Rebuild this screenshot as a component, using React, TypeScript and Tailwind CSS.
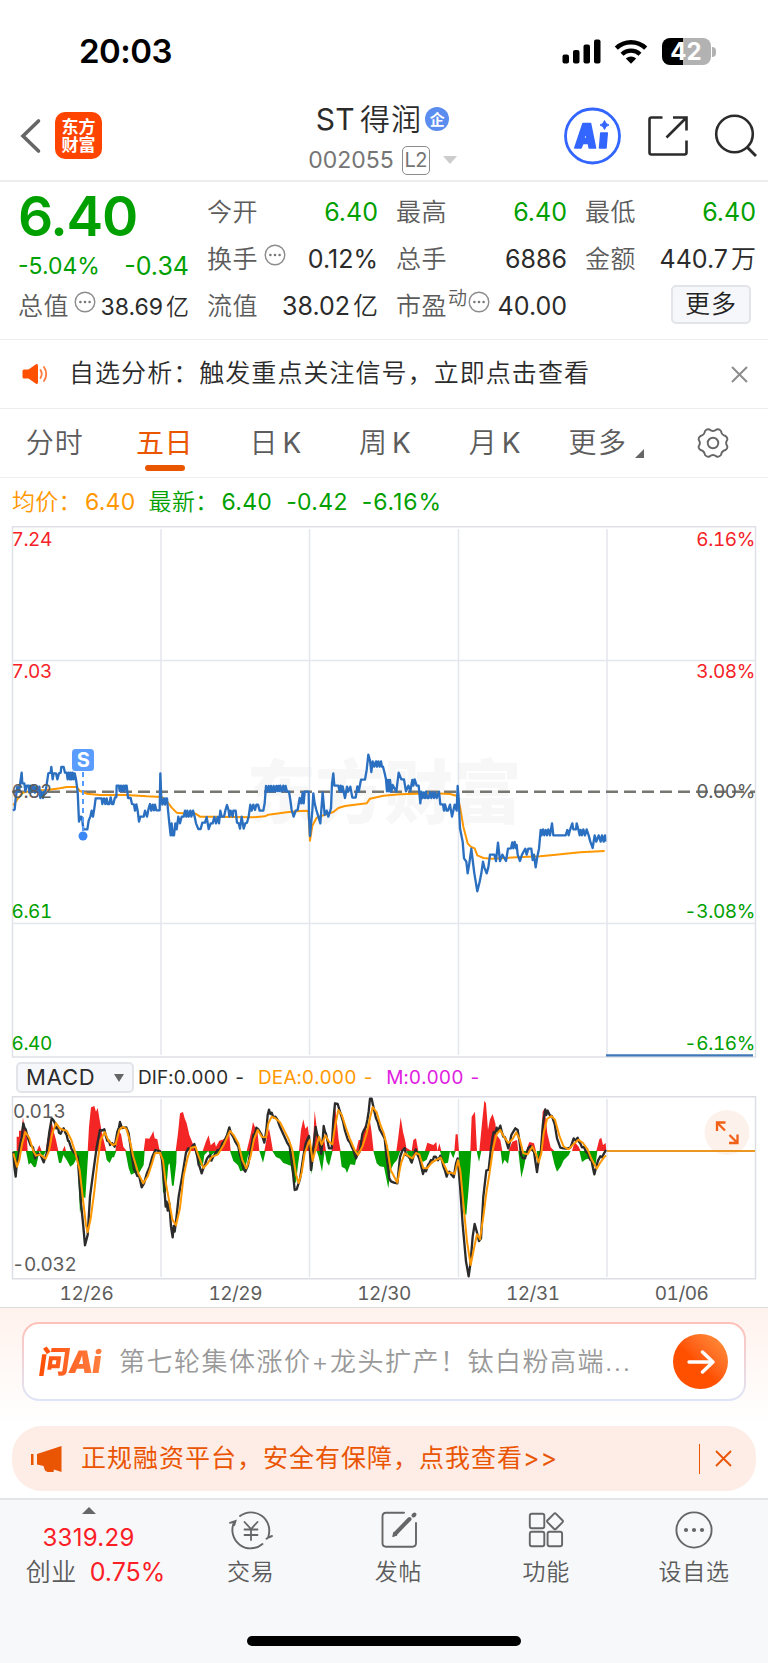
import React from "react";

const tabs = [
    { label: "分时" },
    { label: "五日" },
    { label: "日", unit: "K" },
    { label: "周", unit: "K" },
    { label: "月", unit: "K" },
];
const dates = ["12/26", "12/29", "12/30", "12/31", "01/06"];

// Intraday series, drawn at three units per pixel
const pricePoints =
    "39,272 44,268 47,236 52,200 57,215 62,180 65,158 67,190 73,190 76,215 80,197 86,197 88,218 91,197 93,215 97,197 99,215 101,197 105,218 109,200 113,215 118,200 121,234 124,215 129,234 132,215 136,215 139,200 145,160 152,158 154,141 158,178 161,160 168,160 172,178 177,160 182,158 184,141 191,141 195,158 200,158 203,178 206,158 210,178 212,158 215,178 218,158 221,178 224,160 228,178 233,215 237,305 242,290 246,292 250,328 262,328 266,302 271,290 275,272 279,290 283,265 287,235 305,235 307,252 312,235 316,252 320,235 323,252 328,252 332,232 336,252 340,252 345,232 349,232 350,197 357,197 359,213 363,197 366,213 370,197 373,213 376,197 380,197 384,234 392,234 396,252 402,254 405,272 409,253 413,272 417,305 421,290 431,290 435,272 441,290 446,265 450,252 454,272 458,254 462,271 465,254 469,271 479,271 481,160 484,235 487,254 492,235 495,254 498,235 501,235 504,270 508,310 512,346 515,310 518,346 522,346 526,310 530,328 535,290 540,310 545,290 551,290 555,272 559,290 562,272 566,290 571,272 574,290 579,272 584,290 588,310 595,327 602,327 607,308 615,308 620,291 626,327 632,310 638,310 643,291 648,310 653,291 657,310 661,272 665,290 672,290 676,272 681,255 686,272 688,290 692,272 698,290 700,272 707,272 711,308 716,310 720,326 725,290 731,326 736,310 741,308 746,290 751,254 755,272 760,254 765,270 769,254 774,254 779,272 790,272 794,250 798,198 802,215 806,198 810,215 813,198 817,215 821,198 825,215 829,198 832,213 835,198 838,213 841,197 845,215 850,197 854,213 857,198 861,215 867,215 871,240 875,270 881,290 887,272 893,270 899,234 904,250 908,217 911,250 914,215 922,215 926,215 927,290 930,348 937,272 940,220 944,250 949,270 955,290 961,310 968,217 974,285 980,272 985,290 993,265 996,190 1000,160 1003,197 1015,197 1019,215 1022,197 1025,215 1028,199 1031,215 1035,234 1041,200 1045,215 1051,200 1057,233 1067,233 1072,199 1076,215 1083,179 1095,179 1100,150 1105,104 1110,122 1114,156 1118,124 1123,140 1128,124 1131,140 1135,124 1139,140 1143,124 1146,140 1149,140 1154,160 1158,178 1161,214 1164,180 1167,214 1170,180 1174,215 1178,195 1189,215 1196,158 1204,178 1212,178 1218,214 1225,197 1231,213 1237,180 1240,197 1244,178 1250,197 1256,197 1261,250 1264,215 1268,234 1271,217 1275,234 1278,215 1282,234 1286,234 1290,217 1294,234 1298,217 1302,234 1306,217 1310,234 1317,215 1321,253 1329,253 1332,272 1335,253 1340,272 1344,272 1350,254 1356,290 1364,254 1370,272 1373,198 1376,235 1380,325 1388,365 1392,415 1399,425 1403,460 1408,430 1414,386 1418,420 1423,460 1432,514 1439,485 1444,460 1449,425 1453,442 1460,460 1465,442 1470,404 1483,404 1488,423 1494,368 1500,423 1507,404 1518,423 1524,386 1533,385 1537,367 1540,385 1544,366 1548,385 1550,375 1553,404 1560,423 1566,404 1576,386 1580,404 1585,386 1594,386 1598,420 1602,404 1607,442 1612,410 1617,386 1622,330 1625,346 1629,328 1633,346 1637,330 1641,346 1645,328 1650,346 1656,310 1660,346 1697,346 1702,330 1706,346 1710,330 1717,310 1720,328 1728,328 1730,310 1735,328 1739,346 1742,330 1746,346 1750,328 1755,346 1760,328 1766,346 1771,365 1778,384 1784,346 1789,365 1796,346 1802,365 1806,346 1811,365 1815,346 1816,365";

const averagePoints =
    "40,256 52,238 68,218 90,213 140,210 180,205 200,201 229,201 240,213 260,221 300,225 380,225 440,229 485,231 500,243 515,263 530,278 545,280 580,278 590,283 600,290 640,290 760,292 795,289 805,284 860,277 900,273 925,272 930,362 937,317 950,293 1000,276 1015,264 1035,258 1100,250 1110,236 1150,227 1200,223 1300,220 1350,222 1372,228 1380,260 1390,320 1403,370 1412,380 1424,385 1432,406 1450,414 1475,416 1550,412 1620,409 1660,405 1740,397 1814,393";

const difPoints =
    "40,335 43,380 47,410 50,375 54,355 59,322 65,293 70,250 73,262 77,268 84,295 92,316 99,322 105,355 114,341 122,345 131,367 140,340 148,276 155,235 160,240 164,247 169,265 173,258 177,278 182,281 187,270 191,265 196,278 200,285 204,302 207,304 215,328 225,341 233,350 242,478 250,560 255,616 263,585 270,470 279,402 290,322 297,285 300,270 305,272 313,268 318,290 322,303 327,302 330,315 336,309 344,320 352,275 357,262 360,246 366,264 379,262 386,280 394,338 402,388 408,398 412,408 418,410 425,442 432,430 440,402 449,380 457,350 466,330 480,334 486,360 492,430 497,500 500,485 503,512 508,490 513,560 518,592 521,558 524,575 528,545 536,470 548,400 558,338 565,325 570,328 577,318 583,312 587,330 592,350 596,375 599,380 605,400 611,382 616,370 620,358 624,351 630,345 634,362 640,350 645,342 653,330 660,330 667,310 672,305 681,286 688,262 693,280 700,291 706,305 715,320 720,345 726,365 731,388 736,395 744,376 754,320 760,285 765,280 769,263 775,268 784,283 789,295 793,308 799,270 803,225 807,209 811,222 815,218 820,232 826,230 832,238 839,258 850,283 861,307 869,320 877,379 884,450 890,448 900,417 910,350 917,310 922,298 927,288 933,390 936,370 939,330 947,261 951,282 956,295 964,342 968,300 971,258 975,275 978,281 987,325 995,325 1000,240 1005,190 1013,192 1020,215 1029,244 1035,272 1040,288 1044,300 1050,308 1055,320 1061,332 1068,355 1073,342 1079,335 1087,282 1092,270 1097,263 1102,240 1106,215 1110,176 1115,176 1121,205 1128,235 1133,245 1139,268 1146,280 1154,295 1159,345 1163,374 1168,415 1173,424 1182,428 1192,430 1200,351 1207,332 1214,324 1218,345 1224,348 1230,356 1235,368 1242,345 1247,328 1253,345 1258,356 1264,380 1269,402 1273,390 1278,394 1284,375 1288,370 1293,360 1297,366 1302,350 1307,350 1314,361 1321,347 1326,362 1330,379 1335,392 1340,410 1344,398 1348,395 1355,405 1361,412 1368,370 1373,355 1380,436 1388,553 1398,664 1406,709 1412,665 1418,590 1424,552 1430,574 1437,603 1443,595 1450,470 1459,392 1466,389 1473,325 1478,290 1481,276 1486,280 1490,263 1494,273 1501,257 1506,278 1510,290 1515,292 1519,305 1525,325 1530,305 1534,285 1540,275 1546,265 1553,270 1559,307 1563,345 1568,354 1575,355 1585,324 1592,318 1597,330 1602,335 1607,370 1611,396 1616,360 1622,340 1629,250 1636,208 1639,225 1643,212 1649,225 1656,229 1664,252 1671,295 1681,323 1690,325 1700,326 1711,323 1716,310 1721,295 1727,302 1733,293 1737,305 1741,310 1746,322 1752,321 1758,335 1765,342 1770,358 1775,363 1779,385 1783,403 1789,380 1794,362 1801,349 1806,352 1810,344 1818,330";

const deaPoints =
    "40,340 51,380 58,360 66,312 76,276 88,294 100,333 108,347 120,343 137,356 147,333 157,280 168,249 178,264 190,270 200,272 214,300 226,338 239,390 249,478 258,556 263,577 272,536 283,454 292,370 302,300 314,276 325,301 338,315 347,312 358,269 368,261 379,266 389,300 400,350 415,400 430,430 444,407 457,367 465,340 480,338 489,361 496,420 505,470 517,539 528,556 540,504 551,407 563,352 573,323 586,320 597,351 610,384 623,370 635,351 654,343 671,315 690,273 702,287 715,310 727,360 739,385 751,352 762,298 773,270 786,291 798,292 805,250 815,230 825,234 840,247 853,272 866,298 877,330 888,403 896,429 905,398 914,339 929,300 938,363 946,331 957,290 965,314 976,286 986,304 997,313 1005,260 1015,210 1025,224 1038,264 1051,300 1064,330 1074,345 1088,318 1100,280 1111,230 1118,201 1130,217 1141,254 1151,279 1161,318 1172,390 1192,428 1203,370 1214,340 1228,350 1237,355 1248,339 1258,343 1270,384 1281,385 1297,366 1312,358 1322,353 1332,374 1344,399 1354,398 1364,402 1374,361 1381,392 1391,500 1401,604 1412,675 1422,625 1431,583 1440,598 1450,530 1460,452 1468,403 1479,327 1490,282 1501,270 1510,287 1525,309 1538,297 1549,277 1559,298 1570,340 1583,343 1597,320 1607,340 1616,367 1624,339 1631,280 1641,237 1654,228 1665,239 1679,290 1691,320 1706,328 1722,311 1735,299 1749,309 1763,329 1775,358 1790,386 1800,369 1812,352 1818,346";

const redBars =
    "50,333 50,290 57,290 57,272 64,272 69,232 74,265 80,285 83,333 110,333 118,315 125,333 137,333 142,300 148,270 154,238 160,270 168,300 175,333 187,333 194,317 198,333 263,333 267,260 273,202 283,198 288,215 293,203 299,240 306,280 317,325 319,333 346,333 351,300 357,275 363,282 370,320 380,333 431,333 436,295 448,296 456,282 460,273 464,295 472,298 478,328 485,333 527,333 534,280 540,220 549,216 554,235 560,250 568,285 578,310 588,333 608,333 618,304 626,286 632,316 644,305 648,320 658,302 667,299 677,295 688,283 692,333 740,333 748,300 754,274 759,246 765,262 772,270 778,333 793,333 803,280 807,265 813,298 819,333 897,333 903,270 910,238 916,266 923,258 929,300 932,333 938,333 944,212 951,270 956,310 965,300 972,295 978,333 995,333 1000,260 1004,184 1011,250 1016,300 1022,333 1068,333 1076,300 1086,300 1093,258 1102,272 1109,238 1114,270 1121,333 1189,333 1195,290 1202,232 1209,275 1215,300 1219,323 1235,333 1240,300 1248,295 1255,333 1275,333 1282,308 1300,315 1309,306 1312,333 1318,310 1324,333 1363,333 1367,283 1373,283 1377,333 1411,333 1415,230 1425,215 1431,333 1438,333 1446,250 1453,182 1458,190 1464,270 1470,238 1478,222 1486,250 1490,285 1501,300 1507,333 1525,333 1537,305 1551,300 1555,333 1578,333 1588,306 1602,310 1608,333 1622,333 1628,215 1634,205 1642,280 1652,322 1663,333 1716,333 1724,306 1736,320 1742,333 1789,333 1798,298 1804,293 1809,315 1817,309 1819,333";

const greenBars =
    "40,333 46,415 55,350 60,333 78,333 86,374 92,368 102,382 108,380 119,333 126,350 132,345 138,333 170,333 177,369 184,368 190,345 200,360 211,380 221,372 232,350 240,520 250,470 256,475 262,380 265,333 315,333 320,360 329,369 337,352 342,352 349,333 376,333 386,385 393,404 408,397 417,399 431,375 434,333 484,333 489,458 498,455 505,375 509,370 516,437 521,437 529,370 530,333 585,333 597,372 608,380 613,345 625,333 631,350 640,340 649,345 660,333 690,333 700,363 714,376 721,394 735,389 743,350 751,333 778,333 789,368 797,333 817,333 828,351 840,356 850,369 861,373 872,377 881,420 888,430 894,374 900,333 931,333 935,404 943,333 950,333 956,350 966,395 974,333 980,365 987,377 998,333 1019,333 1025,380 1036,386 1041,399 1051,373 1065,375 1074,333 1120,333 1130,370 1139,379 1152,381 1165,445 1172,390 1181,371 1191,360 1201,333 1220,333 1231,369 1240,341 1248,333 1256,345 1269,366 1280,359 1290,333 1320,333 1331,371 1344,368 1350,333 1360,355 1367,333 1376,333 1383,470 1391,520 1399,525 1406,445 1411,380 1414,333 1430,333 1437,366 1444,333 1502,333 1507,374 1514,359 1524,371 1530,333 1555,333 1564,413 1572,380 1581,333 1610,333 1616,375 1622,333 1654,333 1664,375 1671,395 1683,379 1691,361 1706,346 1712,333 1738,333 1746,366 1758,358 1771,355 1780,380 1787,372 1792,333";

function Dots({ className = "" }: { className?: string }) {
    return (
        <svg className={className} width="22" height="22" viewBox="0 0 22 22">
            <circle cx="11" cy="11" r="9.8" fill="none" stroke="#8c8c8c" strokeWidth="1.4" />
            <circle cx="6.4" cy="11" r="1.3" fill="#777" />
            <circle cx="11" cy="11" r="1.3" fill="#777" />
            <circle cx="15.6" cy="11" r="1.3" fill="#777" />
        </svg>
    );
}

type StatProps = { label: string; value: string; unit?: string; green?: boolean; small?: boolean; extra?: React.ReactNode };

function Stat({ label, value, unit, green, small, extra }: StatProps) {
    return (
        <div className="flex h-[47px] items-center justify-between whitespace-nowrap">
            <div className="flex items-center text-[25px] font-[350] tracking-[0.5px] text-[#5c5c5c]">
                {label}
                {extra}
            </div>
            <div className={green ? "text-[25px] text-[#00a000]" : small ? "pt-0.5 text-[23px] text-[#2b2b2b]" : "text-[25px] text-[#2b2b2b]"}>
                {value}
                {unit && <span className="ml-[3px] font-[350]">{unit}</span>}
            </div>
        </div>
    );
}

function StatusBar() {
    return (
        <div className="flex h-[92px] items-center justify-between pt-[11px] pr-[52px] pl-[79px]">
            <div className="text-[33px] leading-none font-semibold tracking-[-0.5px] text-black">20:03</div>
            <div className="flex items-center">
                <svg width="39" height="25" viewBox="0 0 39 25">
                    <rect x="0.5" y="15.5" width="6.5" height="9" rx="2" />
                    <rect x="11" y="11" width="6.5" height="13.5" rx="2" />
                    <rect x="21.5" y="5.5" width="6.5" height="19" rx="2" />
                    <rect x="32" y="0.5" width="6.5" height="24" rx="2" />
                </svg>
                <svg className="ml-[13px]" width="34" height="25" viewBox="0 0 34 25" fill="none" stroke="#000">
                    <path d="M2.3 9.2C10.5 1.3 23.5 1.3 31.7 9.2" strokeWidth="4.4" />
                    <path d="M8 15.2c5-4.700 13-4.700 18 0" strokeWidth="4.2" />
                    <path d="M11.8 19.5c3-2.700 7.400-2.700 10.400 0L17 24.800z" fill="#000" stroke="none" />
                </svg>
                <div className="ml-3.5 flex h-[27px] w-[49px] items-center justify-center rounded-[8px] bg-linear-to-r from-black from-42% to-[#b2b2b2] to-42% text-[24px] leading-none font-bold text-white">
                    42
                </div>
                <div className="ml-[1.5px] h-2.5 w-1 rounded-r-full bg-[#b2b2b2]" />
            </div>
        </div>
    );
}

function Header() {
    return (
        <div className="flex h-[90px] items-center justify-between border-b-2 border-[#ececec] pr-[11px] pl-[19px]">
            <div className="flex w-[191px] items-center">
                <svg width="24" height="38" viewBox="0 0 24 38" fill="none" stroke="#666" strokeWidth="3.6" strokeLinecap="round">
                    <path d="M19.5 4 4 19l15.5 15" />
                </svg>
                <div className="-mt-px ml-3 flex h-[47px] w-[47px] flex-col items-center justify-center rounded-[10px] bg-[#ff4400] text-[17px] leading-[18px] font-bold text-white">
                    <span>东方</span>
                    <span>财富</span>
                </div>
            </div>
            <div className="flex flex-col items-center pt-2">
                <div className="flex h-[40px] items-center text-[30px] whitespace-nowrap text-[#2b2b2b]">
                    <span className="tracking-[0.3px]">ST</span>
                    <span className="ml-[5px] font-[350] tracking-[1.2px]">得润</span>
                    <span className="ml-[3px] flex h-6 w-6 items-center justify-center rounded-full bg-[#5b8df0] text-[15px] leading-none font-bold text-white">
                        企
                    </span>
                </div>
                <div className="flex h-[42px] items-center text-[23px] text-[#757575]">
                    <span>002055</span>
                    <span className="ml-2 flex h-[29px] w-7 items-center justify-center rounded-[5px] border-[1.5px] border-[#8c8c8c] text-[20px] leading-none tracking-[-0.5px]">
                        L2
                    </span>
                    <svg className="ml-[13px]" width="14" height="8" viewBox="0 0 14 8">
                        <path d="M0 0h14L7 8z" fill="#ccc" />
                    </svg>
                </div>
            </div>
            <div className="flex w-[202px] items-center justify-end">
                <svg width="58" height="58" viewBox="0 0 58 58">
                    <circle cx="29.5" cy="29" r="27" fill="none" stroke="#3366ff" strokeWidth="2.8" />
                    <path d="M20 16.500h7.500l5 24.500h-6.200l-.9-4.500h-5.500l-1.900 4.500h-6.200zM22.800 24.500l-2 7h3.200z" fill="#3366ff" stroke="#3366ff" strokeWidth="1.6" strokeLinejoin="round" fillRule="evenodd" />
                    <path d="M37.800 26h6.500l-1.300 15h-6.500z" fill="#3366ff" stroke="#3366ff" strokeWidth="1.5" strokeLinejoin="round" />
                    <path d="M41.500 13.500q.9 3.600 4.500 4.500-3.600.9-4.500 4.500-.9-3.600-4.500-4.500 3.600-.9 4.500-4.500z" fill="#3366ff" stroke="#3366ff" />
                </svg>
                <svg className="ml-[26px]" width="42" height="42" viewBox="0 0 42 42" fill="none" stroke="#2b2b2b" strokeWidth="2.6">
                    <path d="M15.500 2.500H4.500Q2.500 2.500 2.500 4.500V37.500Q2.500 39.500 4.500 39.500H37.500Q39.500 39.500 39.500 37.500V25.500" />
                    <path d="M26 2.500h13.500V15.500M39.500 2.500 19.500 22.500" />
                </svg>
                <svg className="ml-6" width="44" height="44" viewBox="0 0 44 44" fill="none" stroke="#2b2b2b" strokeWidth="2.6">
                    <circle cx="21.5" cy="20" r="18.3" />
                    <path d="m34 33 9 9" strokeWidth="3" />
                </svg>
            </div>
        </div>
    );
}

function Quote() {
    return (
        <div className="flex h-[158px] items-start gap-[18px] border-b border-[#eee] pt-[7px] pr-3 pl-[18px]">
            <div className="w-[171px]">
                <div className="h-[54px] text-[55px] leading-[54px] font-semibold tracking-[-1.2px] text-[#00a000]">6.40</div>
                <div className="flex h-10 items-center justify-between pt-1.5 text-[#00a000]">
                    <span className="text-[23px]">-5.04%</span>
                    <span className="pt-0.5 text-[25px]">-0.34</span>
                </div>
                <Stat label="总值" value="38.69" unit="亿" small extra={<Dots className="-mt-2.5 ml-[5px]" />} />
            </div>
            <div className="w-[171px]">
                <Stat label="今开" value="6.40" green />
                <Stat label="换手" value="0.12%" extra={<Dots className="-mt-2.5 ml-1.5" />} />
                <Stat label="流值" value="38.02" unit="亿" />
            </div>
            <div className="w-[171px]">
                <Stat label="最高" value="6.40" green />
                <Stat label="总手" value="6886" />
                <Stat
                    label="市盈"
                    value="40.00"
                    extra={
                        <>
                            <span className="-mt-3.5 ml-px text-[19px]">动</span>
                            <Dots className="-mt-2.5" />
                        </>
                    }
                />
            </div>
            <div className="w-[171px]">
                <Stat label="最低" value="6.40" green />
                <Stat label="金额" value="440.7" unit="万" />
                <div className="mt-0.5 mr-[5px] ml-auto flex h-[39px] w-20 items-center justify-center rounded-[5px] border-2 border-[#e2e4e9] bg-[#f6f7fa] text-[25px] font-[350] tracking-[1px] text-[#222]">
                    更多
                </div>
            </div>
        </div>
    );
}

function Notice() {
    return (
        <div className="flex h-[69px] items-center border-b border-[#eee] pr-5 pl-[22px] text-[25px] text-[#2b2b2b]">
            <svg width="26" height="22" viewBox="0 0 26 22">
                <path d="M2 6.500h4.500L14 1.300Q16 .5 16 3v16q0 2.500-2 1.700L6.500 15.500H2Q.5 15.500.5 14V8Q.5 6.500 2 6.500z" fill="#ff5000" />
                <path d="M18.500 7q2.500 4 0 8M22 4q4.500 7 0 14" fill="none" stroke="#ff7a3c" strokeWidth="1.8" strokeLinecap="round" />
            </svg>
            <span className="ml-[21px] font-[350] tracking-[1.05px]">自选分析：触发重点关注信号，立即点击查看</span>
            <svg className="ml-auto" width="17" height="17" viewBox="0 0 17 17" stroke="#8c8c8c" strokeWidth="2">
                <path d="m1 1 15 15M16 1 1 16" />
            </svg>
        </div>
    );
}

function Tabs() {
    return (
        <div className="flex h-[69px] items-stretch border-b border-[#eee] text-[28px] font-[350] text-[#5c5c5c]">
            {tabs.map(({ label, unit }) => (
                <div key={label} className="relative flex flex-1 items-center justify-center">
                    <span className={label === "五日" ? "font-normal tracking-[0.5px] text-[#ea5500]" : unit ? "pl-[3px] tracking-[1px]" : "tracking-[1px]"}>
                        {label}
                        {unit && <span className="ml-1 font-normal">{unit}</span>}
                    </span>
                    {label === "五日" && <div className="absolute bottom-[6px] h-1.5 w-10 rounded-full bg-[#ea5500]" />}
                </div>
            ))}
            <div className="flex flex-1 items-center justify-center">
                <span className="ml-1.5 tracking-[1.5px]">更多</span>
                <svg className="mt-5 ml-2" width="9" height="9" viewBox="0 0 9 9">
                    <path d="M9 0v9H0z" fill="#666" />
                </svg>
            </div>
            <div className="flex flex-1 items-center justify-center">
                <svg width="32" height="32" viewBox="0 0 32 32" fill="none" stroke="#666" strokeWidth="1.9">
                    <path d="M12.500 2.500Q16 5.500 19.500 2.500 22 1.500 24 4 24.500 8 28.500 9 31 11 30.200 13 28 16 30.200 19 31 21 28.500 23 24.500 24 24 28 22 30.500 19.500 29.500 16 26.500 12.500 29.500 10 30.500 8 28 7.500 24 3.500 23 1 21 1.800 19 4 16 1.800 13 1 11 3.500 9 7.500 8 8 4 10 1.500 12.500 2.500z" strokeLinejoin="round" />
                    <circle cx="16" cy="16" r="5.3" />
                </svg>
            </div>
        </div>
    );
}

function PriceChart() {
    return (
        <svg className="block tracking-[-0.4px] tabular-nums" width="768" height="532" viewBox="0 526 768 532" fontSize="19">
            <text x="384" y="818" textAnchor="middle" fontSize="69" fontWeight="900" fill="#f7f7f8">东方财富</text>
            <g stroke="#e4e6ee" strokeWidth="1.5" fill="none">
                <path d="M12.500 526.800H755.500V1057H12.500z" stroke="#dfe1e6" />
                <path d="M12 660.500H755M12 923.500H755M161 529V1055M309.500 529V1055M458.500 529V1055M607 529V1055" />
            </g>
            <path d="M12 791.700H755" stroke="#777772" strokeWidth="2.4" strokeDasharray="12 6" />
            <g fill="none" transform="translate(0 720) scale(0.33333)" strokeLinejoin="round">
                <polyline points={averagePoints} stroke="#ff9800" strokeWidth="6" />
                <polyline points={pricePoints} stroke="#2b70c0" strokeWidth="7" />
            </g>
            <path d="M83 772v60" stroke="#559bff" strokeWidth="2" strokeDasharray="5 4" />
            <circle cx="83" cy="836" r="4.5" fill="#3d86f5" />
            <rect x="72" y="749" width="22" height="22" rx="3.5" fill="#5a9dff" />
            <text x="83" y="767" textAnchor="middle" fontSize="20" fontWeight="700" fill="#fff">S</text>
            <path d="M606 1055.300H753" stroke="#3f79b8" strokeWidth="2.3" />
            <g fill="#f52228">
                <text x="11.500" y="545.5">7.24</text>
                <text x="11.500" y="678">7.03</text>
                <text x="755" y="545.5" textAnchor="end">6.16%</text>
                <text x="755" y="678" textAnchor="end">3.08%</text>
            </g>
            <g fill="#5c5c5c">
                <text x="11.500" y="798">6.82</text>
                <text x="755" y="798" textAnchor="end">0.00%</text>
            </g>
            <g fill="#00a000">
                <text x="11.500" y="917.5">6.61</text>
                <text x="11.500" y="1049.5">6.40</text>
                <text x="755" y="917.5" textAnchor="end">-3.08%</text>
                <text x="755" y="1049.5" textAnchor="end">-6.16%</text>
            </g>
        </svg>
    );
}

function MacdChart() {
    return (
        <svg className="block tracking-[-0.4px] tabular-nums" width="768" height="184" viewBox="0 1096 768 184" fontSize="19">
            <g stroke="#e4e6ee" strokeWidth="1.5" fill="none">
                <path d="M12.500 1096.800H755.500V1278.800H12.500z" stroke="#dcdee3" />
                <path d="M161 1099V1277M309.500 1099V1277M458.500 1099V1277M607 1099V1277" />
            </g>
            <g transform="translate(0 1040) scale(0.33333)" fill="none" strokeLinejoin="round">
                <polygon points={`39,333 ${redBars}`} fill="#f42525" />
                <polygon points={`39,333 ${greenBars}`} fill="#00a000" />
                <polyline points={difPoints} stroke="#2b2b2b" strokeWidth="7" />
                <polyline points={deaPoints} stroke="#ff9800" strokeWidth="6" />
            </g>
            <circle cx="727" cy="1132.5" r="22.5" fill="#fdf1eb" />
            <path d="M607 1151H755" stroke="#ec9722" strokeWidth="2.2" />
            <path d="M717 1131v-8.500h8.500M717 1122.500l8 8M737.500 1134.500v8.500h-8.500M737.500 1143l-8-8" fill="none" stroke="#f06018" strokeWidth="2.3" />
            <g fill="#5c5c5c">
                <text x="13" y="1118">0.013</text>
                <text x="12" y="1271">-0.032</text>
            </g>
        </svg>
    );
}

function AskAi() {
    return (
        <div className="h-[119px] border-t border-[#dedede] bg-linear-to-b from-[#fff2ed] to-white px-[22px] pt-3.5">
            <div className="h-[79px] rounded-[17px] bg-linear-to-b from-[#ffc0b8] to-[#dde5f7] p-0.5">
                <div className="flex h-full items-center rounded-[15px] bg-white pr-4 pl-[15px]">
                    <span className="w-[66px] -skew-x-8 bg-linear-to-r from-[#ff4d00] to-[#ff8040] bg-clip-text text-[31px] leading-[38px] font-black tracking-[-1px] whitespace-nowrap text-transparent">
                        问Ai
                    </span>
                    <span className="ml-3.5 text-[26px] font-[350] tracking-[1.5px] whitespace-nowrap text-[#999]">
                        第七轮集体涨价+龙头扩产！钛白粉高端...
                    </span>
                    <div className="ml-auto flex h-[55px] w-[55px] shrink-0 items-center justify-center rounded-full bg-linear-to-tr from-[#ff5000] from-45% to-[#ff943f]">
                        <svg width="28" height="24" viewBox="0 0 28 24" fill="none" stroke="#fff" strokeWidth="3.4" strokeLinecap="round" strokeLinejoin="round">
                            <path d="M2 12h24M15.500 2 26 12 15.500 22" />
                        </svg>
                    </div>
                </div>
            </div>
        </div>
    );
}

function Promo() {
    return (
        <div className="mx-3 flex h-[65px] items-center rounded-[30px] bg-[#fdede6] pr-6 pl-[19px] text-[#ea5504]">
            <svg width="32" height="28" viewBox="0 0 32 28" fill="#ea5504">
                <path d="M0 9h2.500v11H0zM6 9 30.500 1v26L23 24.500l-.5 2.500h-6l-2.500-1.500-1.500-4.500L6 19.500z" />
            </svg>
            <span className="ml-[18px] text-[25px] tracking-[1px]">正规融资平台，安全有保障，点我查看&gt;&gt;</span>
            <div className="mr-[15px] ml-auto h-[30px] w-[1.5px] bg-[#ea5504]" />
            <svg width="17" height="17" viewBox="0 0 17 17" stroke="#ea5504" strokeWidth="1.8">
                <path d="m1 1 15 15M16 1 1 16" />
            </svg>
        </div>
    );
}

function NavItem({ label, children }: { label: string; children: React.ReactNode }) {
    return (
        <div className="flex flex-1 flex-col items-center">
            <svg className="mt-2.5" width="44" height="40" viewBox="0 0 44 40" fill="none" stroke="#666" strokeWidth="1.9" strokeLinecap="round">
                {children}
            </svg>
            <span className="mt-2 text-[23px] leading-[28px] font-[350] tracking-[0.8px] text-[#5c5c5c]">{label}</span>
        </div>
    );
}

function BottomBar() {
    return (
        <div className="h-[165px] border-t-2 border-[#e4e5e7] bg-[#f7f8fa]">
            <div className="flex h-[136px]">
                <div className="flex w-[177px] flex-col items-center text-[#fb2025]">
                    <svg className="mt-[7px]" width="14" height="7" viewBox="0 0 14 7">
                        <path d="M7 0l7 7H0z" fill="#666" />
                    </svg>
                    <span className="mt-[11px] text-[24px] leading-[26px] tracking-[0.3px]">3319.29</span>
                    <div className="mt-[6px] flex items-center pl-3.5 leading-[30px] whitespace-nowrap">
                        <span className="mr-[13px] text-[25px] font-[350] tracking-[0.5px] text-[#5c5c5c]">创业</span>
                        <span className="text-[25px]">0.75%</span>
                    </div>
                </div>
                <NavItem label="交易">
                    <path d="M11 6A18.300 18.300 0 0 1 39.300 26.500M37.500 28.800 39.300 27.500 43 26M5 12.500A18.300 18.300 0 0 0 33.500 34M1 12.800 6.500 11 5.300 15" />
                    <path d="m15.500 12 6.500 7 6.500-7M15.500 19.500h13M15.500 25h13M22 19.500v10.500" strokeWidth="1.8" />
                </NavItem>
                <NavItem label="发帖">
                    <path d="M27 2.800H9Q5.500 2.800 5.500 6.500V33Q5.500 36.700 9 36.700H35.500Q39 36.700 39 33V13" />
                    <path d="m18 24 14.500-15" strokeWidth="4" />
                    <path d="m36.500 5.500 1-1" strokeWidth="4" />
                    <path d="m15.800 26.300 1-4 3 2.500z" fill="#666" strokeWidth="1" />
                </NavItem>
                <NavItem label="功能">
                    <rect x="5.8" y="3.8" width="14.5" height="14.5" rx="2" />
                    <rect x="5.8" y="21.8" width="14.5" height="14.5" rx="2" />
                    <rect x="23.6" y="21.8" width="14.5" height="14.5" rx="2" />
                    <rect x="25" y="5.3" width="12" height="12" rx="1.5" transform="rotate(45 31 11.300)" />
                </NavItem>
                <NavItem label="设自选">
                    <circle cx="22" cy="20" r="17.6" />
                    <g fill="#666" stroke="none">
                        <circle cx="14" cy="20" r="2.1" />
                        <circle cx="22" cy="20" r="2.1" />
                        <circle cx="30" cy="20" r="2.1" />
                    </g>
                </NavItem>
            </div>
            <div className="mx-auto h-2.5 w-[274px] rounded-full bg-black" />
        </div>
    );
}

export default function App() {
    return (
        <div className="flex h-[1663px] w-[768px] flex-col overflow-hidden bg-white font-[Inter,'Noto_Sans_CJK_SC',sans-serif]">
            <StatusBar />
            <Header />
            <Quote />
            <Notice />
            <Tabs />
            <div className="flex h-[48px] items-center pl-3 text-[23px] tracking-[0.3px] whitespace-nowrap text-[#00a000]">
                <span className="font-[350] text-[#ff9800]">均价：</span>
                <span className="ml-[3px] text-[#ff9800]">6.40</span>
                <span className="ml-[13px] font-[350]">最新：</span>
                <span className="ml-[3px]">6.40</span>
                <span className="ml-3.5">-0.42</span>
                <span className="ml-3.5 tracking-[0.9px]">-6.16%</span>
            </div>
            <PriceChart />
            <div className="flex h-[38px] items-center pt-0.5 pl-4 text-[19px] whitespace-nowrap tabular-nums">
                <div className="-mt-px flex h-[31px] w-[118px] items-center justify-between rounded-[5px] border-2 border-[#e2e4e9] bg-[#f6f7fa] pr-2 pl-2 text-[22px] tracking-[0.8px] text-[#2b2b2b]">
                    MACD
                    <svg width="10" height="8" viewBox="0 0 10 8">
                        <path d="M0 0h10L5 8z" fill="#666" />
                    </svg>
                </div>
                <span className="ml-1 tracking-[0.1px] text-[#2b2b2b]">DIF:0.000 -</span>
                <span className="ml-3 tracking-[0.1px] text-[#ff9800]">DEA:0.000 -</span>
                <span className="ml-3 tracking-[0.1px] text-[#e020e0]">M:0.000 -</span>
            </div>
            <MacdChart />
            <div className="flex h-[27px] items-center pt-0.5 pr-3 pl-3 text-[19px] tracking-[-0.5px] text-[#5c5c5c] tabular-nums">
                {dates.map((date) => (
                    <span key={date} className="flex-1 text-center">{date}</span>
                ))}
            </div>
            <AskAi />
            <Promo />
            <div className="mt-auto">
                <BottomBar />
            </div>
        </div>
    );
}
